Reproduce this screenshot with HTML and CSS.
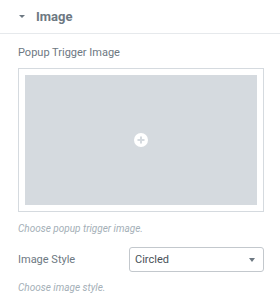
FILE: index.html
```html
<!DOCTYPE html>
<html>
<head>
<meta charset="utf-8">
<link rel="stylesheet" href="styles.css">
</head>
<body>
<div class="panel">
  <div class="section-head">
    <span class="caret"></span>
    <span class="section-title">Image</span>
  </div>
  <div class="controls">
    <div class="label">Popup Trigger Image</div>
    <div class="media">
      <div class="media-inner">
        <svg class="plus" width="14" height="14" viewBox="0 0 14 14">
          <circle cx="7" cy="7" r="7" fill="#fff"/>
          <rect x="6" y="3.5" width="2" height="7" fill="#d5dadf"/>
          <rect x="3.5" y="6" width="7" height="2" fill="#d5dadf"/>
        </svg>
      </div>
    </div>
    <div class="desc">Choose popup trigger image.</div>
    <div class="row">
      <div class="label">Image Style</div>
      <div class="select">
        <span>Circled</span>
        <span class="sel-caret"></span>
      </div>
    </div>
    <div class="desc desc2">Choose image style.</div>
  </div>
</div>
</body>
</html>
```

FILE: styles.css
```css
html, body {
  margin: 0;
  padding: 0;
  background: #fff;
}
body {
  font-family: Roboto, "Liberation Sans", sans-serif;
  color: #6d7882;
  width: 280px;
  height: 305px;
  overflow: hidden;
}
.section-head {
  height: 34px;
  border-bottom: 1px solid #e6e9ec;
  display: flex;
  align-items: center;
  padding-left: 19px;
  box-sizing: border-box;
}
.caret {
  width: 0;
  height: 0;
  border-left: 3px solid transparent;
  border-right: 3px solid transparent;
  border-top: 3px solid #6d7882;
  margin-right: 11px;
}
.section-title {
  font-size: 13px;
  font-weight: bold;
  color: #6d7882;
}
.controls {
  padding: 0 16px 0 18px;
}
.label {
  font-size: 11px;
  color: #6d7882;
  line-height: 14px;
}
.controls > .label {
  margin-top: 12px;
}
.media {
  margin-top: 8px;
  border: 1px solid #d5dadf;
  padding: 6px;
  height: 130px;
}
.media-inner {
  background: #d5dadf;
  height: 130px;
  display: flex;
  align-items: center;
  justify-content: center;
}
.plus {
  display: block;
}
.desc {
  font-size: 10px;
  font-style: italic;
  color: #a4afb7;
  margin-top: 10px;
  line-height: 13px;
}
.row {
  display: flex;
  align-items: center;
  justify-content: space-between;
  margin-top: 12px;
}
.select {
  width: 135px;
  height: 25px;
  box-sizing: border-box;
  border: 1px solid #c3c8cd;
  border-radius: 3px;
  display: flex;
  align-items: center;
  justify-content: space-between;
  padding: 0 8px 0 5px;
  font-size: 11px;
  color: #495157;
}
.sel-caret {
  width: 0;
  height: 0;
  border-left: 3.5px solid transparent;
  border-right: 3.5px solid transparent;
  border-top: 4px solid #6d7882;
}
.desc2 {
  margin-top: 9px;
}
```
